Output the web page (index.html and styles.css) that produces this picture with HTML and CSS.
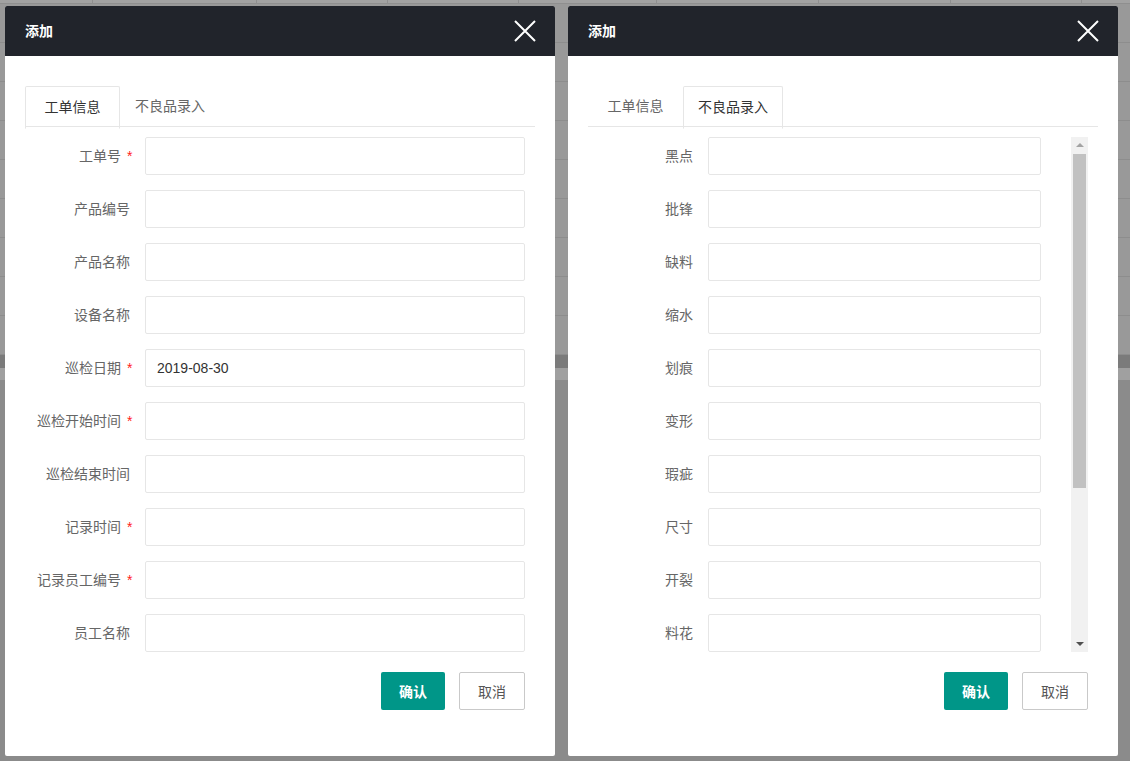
FILE: index.html
```html
<!DOCTYPE html>
<html lang="zh">
<head>
<meta charset="utf-8">
<title>添加</title>
<link rel="stylesheet" href="styles.css">
</head>
<body>
<div class="backdrop">
  <div class="bg-top">
    <span class="col"></span><span class="col"></span><span class="col"></span><span class="col"></span><span class="col"></span><span class="col"></span><span class="col"></span><span class="col"></span><span class="col last"></span>
  </div>
  <div class="bg-row"></div><div class="bg-row"></div><div class="bg-row"></div><div class="bg-row"></div><div class="bg-row"></div><div class="bg-row"></div><div class="bg-row"></div><div class="bg-row"></div><div class="bg-row"></div>
  <div class="bg-dark"></div>
  <div class="bg-light"></div>
  <div class="bg-rest"></div>
</div>

<div class="layer">
  <section class="dlg">
    <header class="dlg-head">
      <span class="dlg-title">添加</span>
      <svg class="close" width="22" height="22" viewBox="0 0 22 22"><path d="M1 1 L21 21 M21 1 L1 21" stroke="#fff" stroke-width="2" fill="none"/></svg>
    </header>
    <div class="dlg-body">
      <ul class="tabs">
        <li class="tab active">工单信息</li>
        <li class="tab">不良品录入</li>
      </ul>
      <div class="tab-content">
        <div class="row"><label class="lbl">工单号<span class="req">*</span></label><div class="inp"></div></div>
        <div class="row"><label class="lbl">产品编号</label><div class="inp"></div></div>
        <div class="row"><label class="lbl">产品名称</label><div class="inp"></div></div>
        <div class="row"><label class="lbl">设备名称</label><div class="inp"></div></div>
        <div class="row"><label class="lbl">巡检日期<span class="req">*</span></label><div class="inp">2019-08-30</div></div>
        <div class="row"><label class="lbl">巡检开始时间<span class="req">*</span></label><div class="inp"></div></div>
        <div class="row"><label class="lbl">巡检结束时间</label><div class="inp"></div></div>
        <div class="row"><label class="lbl">记录时间<span class="req">*</span></label><div class="inp"></div></div>
        <div class="row"><label class="lbl">记录员工编号<span class="req">*</span></label><div class="inp"></div></div>
        <div class="row"><label class="lbl">员工名称</label><div class="inp"></div></div>
      </div>
      <div class="btns">
        <button class="btn ok">确认</button>
        <button class="btn cancel">取消</button>
      </div>
    </div>
  </section>

  <section class="dlg">
    <header class="dlg-head">
      <span class="dlg-title">添加</span>
      <svg class="close" width="22" height="22" viewBox="0 0 22 22"><path d="M1 1 L21 21 M21 1 L1 21" stroke="#fff" stroke-width="2" fill="none"/></svg>
    </header>
    <div class="dlg-body">
      <ul class="tabs">
        <li class="tab">工单信息</li>
        <li class="tab active">不良品录入</li>
      </ul>
      <div class="tab-content">
        <div class="scroll">
          <div class="scroll-inner">
            <div class="row"><label class="lbl">黑点</label><div class="inp narrow"></div></div>
            <div class="row"><label class="lbl">批锋</label><div class="inp narrow"></div></div>
            <div class="row"><label class="lbl">缺料</label><div class="inp narrow"></div></div>
            <div class="row"><label class="lbl">缩水</label><div class="inp narrow"></div></div>
            <div class="row"><label class="lbl">划痕</label><div class="inp narrow"></div></div>
            <div class="row"><label class="lbl">变形</label><div class="inp narrow"></div></div>
            <div class="row"><label class="lbl">瑕疵</label><div class="inp narrow"></div></div>
            <div class="row"><label class="lbl">尺寸</label><div class="inp narrow"></div></div>
            <div class="row"><label class="lbl">开裂</label><div class="inp narrow"></div></div>
            <div class="row"><label class="lbl">料花</label><div class="inp narrow"></div></div>
          </div>
          <div class="sbar">
            <div class="sb-arrow up"></div>
            <div class="sb-track"><div class="sb-thumb"></div></div>
            <div class="sb-arrow down"></div>
          </div>
        </div>
      </div>
      <div class="btns">
        <button class="btn ok">确认</button>
        <button class="btn cancel">取消</button>
      </div>
    </div>
  </section>
</div>
</body>
</html>
```

FILE: styles.css
```css
* { box-sizing: border-box; }
html, body { margin: 0; padding: 0; }
body {
  width: 1130px;
  height: 761px;
  overflow: hidden;
  position: relative;
  font-family: "Noto Sans CJK SC", "Liberation Sans", sans-serif;
  font-size: 14px;
  color: #333;
  background: #8b8b8b;
}

/* dimmed table behind the dialogs */
.backdrop {
  display: flex;
  flex-direction: column;
  height: 761px;
  background: #8b8b8b;
}
.bg-top {
  height: 4px;
  display: flex;
  background: #a2a2a2;
  border-bottom: 1px solid #8f8f8f;
}
.bg-top .col {
  flex: 0 0 auto;
  border-right: 1px solid #8f8f8f;
}
.bg-top .col:nth-child(1) { width: 93px; }
.bg-top .col:nth-child(2) { width: 164px; }
.bg-top .col:nth-child(3) { width: 131px; }
.bg-top .col:nth-child(4) { width: 131px; }
.bg-top .col:nth-child(5) { width: 138px; }
.bg-top .col:nth-child(6) { width: 162px; }
.bg-top .col:nth-child(7) { width: 132px; }
.bg-top .col:nth-child(8) { width: 131px; }
.bg-top .col.last { flex: 1; border-right: none; }
.bg-row {
  height: 39px;
  background: #999999;
  border-bottom: 1px solid #8d8d8d;
}
.bg-dark { height: 13px; background: #7b7b7b; }
.bg-light { height: 12px; background: #a0a0a0; }
.bg-rest { flex: 1; background: #8b8b8b; }

/* dialog windows */
.layer {
  position: absolute;
  left: 0;
  top: 0;
  display: flex;
  gap: 13px;
  padding: 6px 0 0 5px;
}
.dlg {
  width: 550px;
  height: 750px;
  background: #fff;
  border-radius: 2px;
  overflow: hidden;
  display: flex;
  flex-direction: column;
}
.dlg-head {
  height: 50px;
  background: #21242b;
  display: flex;
  align-items: center;
  justify-content: space-between;
  padding: 0 19px 0 20px;
}
.dlg-title {
  color: #fff;
  font-size: 14px;
  font-weight: bold;
  line-height: 20px;
  margin-top: -2px;
}
.close { display: block; }

.dlg-body {
  padding: 30px 20px 0 20px;
}
.tabs {
  list-style: none;
  margin: 0;
  padding: 0;
  display: flex;
  height: 41px;
  border-bottom: 1px solid #e6e6e6;
}
.tab {
  min-width: 65px;
  padding: 0 15px;
  box-sizing: content-box;
  height: 40px;
  line-height: 39px;
  text-align: center;
  color: #666;
  font-size: 14px;
}
.tab.active {
  color: #333;
  height: 41px;
  border: 1px solid #e6e6e6;
  border-bottom-color: #fff;
  border-radius: 2px 2px 0 0;
  padding: 0 14px;
  line-height: 38px;
}

.tab-content {
  padding-top: 10px;
}
.row {
  display: flex;
  height: 38px;
  margin-bottom: 15px;
}
.row:last-child { margin-bottom: 0; }
.lbl {
  width: 120px;
  flex: 0 0 120px;
  padding-right: 15px;
  text-align: right;
  line-height: 37px;
  color: #666;
  white-space: nowrap;
}
.req {
  display: inline-block;
  width: 10px;
  margin-right: -1px;
  padding-left: 6px;
  color: #ff2020;
  text-align: left;
  font-family: "Liberation Sans", sans-serif;
}
.inp {
  width: 380px;
  height: 38px;
  border: 1px solid #e6e6e6;
  border-radius: 2px;
  padding-left: 11px;
  line-height: 36px;
  font-family: "Liberation Sans", sans-serif;
  color: #333;
}
.inp.narrow { width: 333px; }

.scroll {
  display: flex;
  height: 515px;
  width: 500px;
}
.scroll-inner {
  flex: 1;
  overflow: hidden;
}
.sbar {
  width: 17px;
  flex: 0 0 17px;
  background: #f1f1f1;
  display: flex;
  flex-direction: column;
}
.sb-arrow {
  height: 17px;
  position: relative;
}
.sb-arrow::after {
  content: "";
  position: absolute;
  left: 5px;
  width: 0;
  height: 0;
  border-left: 4px solid transparent;
  border-right: 4px solid transparent;
}
.sb-arrow.up::after { top: 6px; border-bottom: 4px solid #a3a3a3; }
.sb-arrow.down::after { top: 7px; border-top: 4px solid #505050; }
.sb-track {
  flex: 1;
  padding: 0 2px;
}
.sb-thumb {
  height: 334px;
  background: #c1c1c1;
}

.btns {
  width: 500px;
  display: flex;
  justify-content: flex-end;
  gap: 14px;
  margin-top: 20px;
}
.btn {
  height: 38px;
  padding: 0 18px;
  font-family: "Noto Sans CJK SC", "Liberation Sans", sans-serif;
  font-size: 14px;
  border-radius: 2px;
  line-height: 36px;
}
.btn.ok {
  background: #009688;
  color: #fff;
  font-weight: bold;
  border: none;
  line-height: 38px;
}
.btn.cancel {
  background: #fff;
  color: #555;
  border: 1px solid #c9c9c9;
}
```
